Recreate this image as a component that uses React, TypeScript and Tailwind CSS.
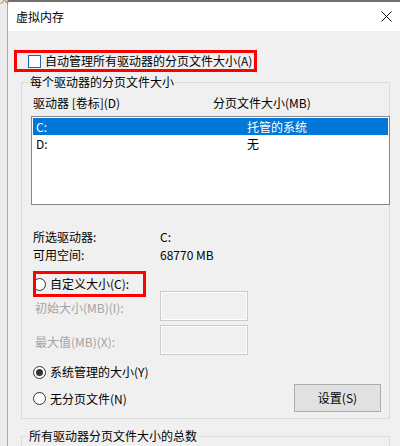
import React from 'react';

const FONT = "font-['Noto_Sans_CJK_SC','Noto_Sans',sans-serif]";

function Radio({ checked = false }: { checked?: boolean }) {
  return (
    <span className="flex h-[13px] w-[13px] shrink-0 items-center justify-center rounded-full border border-[#333333] bg-white">
      {checked && <span className="h-[7px] w-[7px] rounded-full bg-[#333333]" />}
    </span>
  );
}

function SizeInput() {
  return <div className="h-[30px] w-[88px] shrink-0 border border-[#cacaca] bg-[#f0f0f0] shadow-[inset_0_0_0_1px_#ffffff]" />;
}

export default function App() {
  return (
    <div className={`relative flex h-[446px] w-[400px] overflow-hidden bg-[#f0f0f0] text-[12px] text-black ${FONT}`}>
      {/* sliver of the window behind */}
      <div className="relative w-[8px] shrink-0 border-r border-[#a9a9a9] bg-[#ececec]">
        <span className="absolute -left-[3px] -top-[9px] text-[12px] leading-[14px] text-[#b5702d]">快</span>
      </div>

      <div className="flex min-w-0 flex-1 flex-col">
        <div className="h-[2px] shrink-0 bg-[#6f6f6f]" />
        <div className="flex h-[29px] shrink-0 items-center justify-between bg-white pl-[8px] pr-[8px]">
          <span className="text-[12px] leading-[16px]">虚拟内存</span>
          <svg width="11" height="11" viewBox="0 0 11 11">
            <path d="M0.5 0.5 L10.5 10.5 M10.5 0.5 L0.5 10.5" stroke="#111" strokeWidth="1" />
          </svg>
        </div>

        <div className="shrink-0">
          {/* auto-manage checkbox */}
          <div className="ml-[6px] mt-[19px] flex h-[22px] w-[243px] items-center gap-[4px] border-[3px] border-[#ff0000] pl-[11px]">
            <span className="h-[13px] w-[13px] shrink-0 border border-[#1f63b8] bg-white" />
            <span className="leading-[16px]">自动管理所有驱动器的分页文件大小(A)</span>
          </div>

          {/* per-drive group */}
          <div className="ml-[13px] mt-[10px] w-[369px] border border-[#dcdcdc] pb-[6px]">
            <div className="-mt-[9px] ml-[7px] w-fit bg-[#f0f0f0] px-[1px] leading-[16px]">每个驱动器的分页文件大小</div>

            <div className="mt-[5px] flex pl-[11px] leading-[16px]">
              <span className="w-[180px]">驱动器 [卷标](D)</span>
              <span>分页文件大小(MB)</span>
            </div>

            <div className="ml-[9px] mt-[5px] h-[89px] w-[359px] border border-[#828790] bg-white p-[1px]">
              <div className="flex h-[17px] items-center bg-[#0078d7] pl-[3px] leading-[16px] text-white">
                <span className="w-[211px]">C:</span>
                <span>托管的系统</span>
              </div>
              <div className="flex h-[17px] items-center pl-[3px] leading-[16px]">
                <span className="w-[211px]">D:</span>
                <span>无</span>
              </div>
            </div>

            <div className="mt-[23px] flex pl-[11px] leading-[18px]">
              <span className="w-[127px]">所选驱动器:</span>
              <span>C:</span>
            </div>
            <div className="flex pl-[11px] leading-[18px]">
              <span className="w-[127px]">可用空间:</span>
              <span>68770 MB</span>
            </div>

            <div className="ml-[11px] mt-[7px] flex h-[26px] w-[113px] items-center gap-[4px] overflow-hidden border-[3px] border-[#ff0000]">
              <span className="-ml-[3px]">
                <Radio />
              </span>
              <span className="leading-[16px]">自定义大小(C):</span>
            </div>

            <div className="-mt-[6px] flex items-center pl-[13px]">
              <span className="mt-[3px] w-[125px] leading-[16px] text-[#a3a3a3]">初始大小(MB)(I):</span>
              <SizeInput />
            </div>
            <div className="mt-[4px] flex items-center pl-[13px]">
              <span className="mt-[3px] w-[125px] leading-[16px] text-[#a3a3a3]">最大值(MB)(X):</span>
              <SizeInput />
            </div>

            <div className="mt-[8px] flex h-[18px] items-center gap-[4px] pl-[11px]">
              <Radio checked />
              <span className="leading-[16px]">系统管理的大小(Y)</span>
            </div>

            <div className="mt-[3px] flex h-[28px] items-center justify-between pl-[11px] pr-[8px]">
              <div className="mt-[1px] flex items-center gap-[4px]">
                <Radio />
                <span className="leading-[16px]">无分页文件(N)</span>
              </div>
              <button className="h-[28px] w-[87px] border border-[#adadad] bg-[#e1e1e1] leading-[16px]">设置(S)</button>
            </div>
          </div>

          {/* totals group */}
          <div className="ml-[13px] mt-[17px] h-[60px] w-[369px] border border-[#dcdcdc]">
            <div className="-mt-[9px] ml-[6px] w-fit bg-[#f0f0f0] px-[1px] leading-[16px]">所有驱动器分页文件大小的总数</div>
          </div>
        </div>
      </div>
    </div>
  );
}
